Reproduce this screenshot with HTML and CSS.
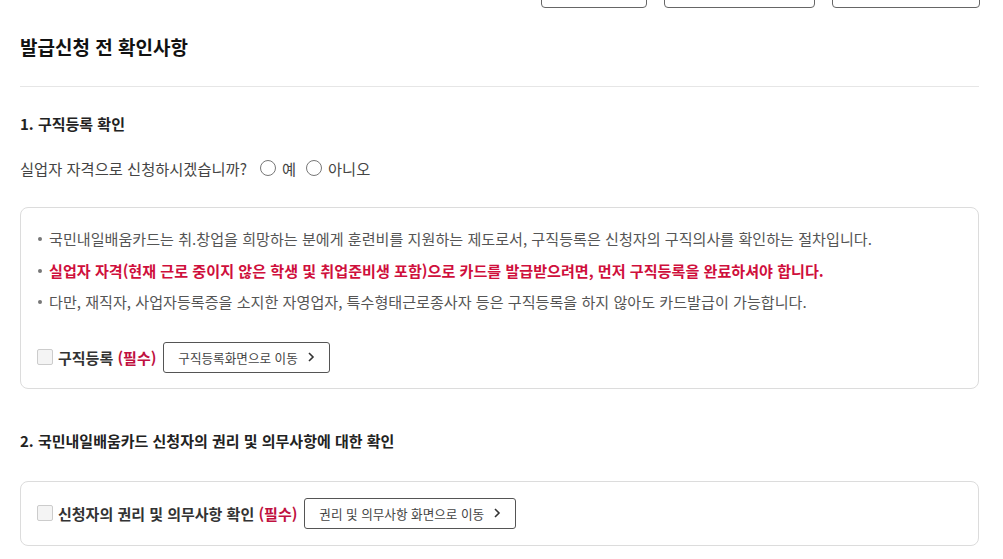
FILE: index.html
```html
<!DOCTYPE html>
<html lang="ko">
<head>
<meta charset="utf-8">
<title>발급신청 전 확인사항</title>
<link rel="stylesheet" href="styles.css">
</head>
<body>
<div class="page">
  <div class="top-actions">
    <button class="top-btn w1" type="button"></button>
    <button class="top-btn w2" type="button"></button>
    <button class="top-btn w3" type="button"></button>
  </div>

  <h2 class="page-title">발급신청 전 확인사항</h2>

  <section class="section">
    <h3 class="section-title">1. 구직등록 확인</h3>
    <div class="question">
      <span class="q-text">실업자 자격으로 신청하시겠습니까?</span>
      <label class="radio"><span class="radio-circle"></span>예</label>
      <label class="radio"><span class="radio-circle"></span>아니오</label>
    </div>
    <div class="box">
      <ul class="bullets">
        <li>국민내일배움카드는 취.창업을 희망하는 분에게 훈련비를 지원하는 제도로서, 구직등록은 신청자의 구직의사를 확인하는 절차입니다.</li>
        <li class="strong">실업자 자격(현재 근로 중이지 않은 학생 및 취업준비생 포함)으로 카드를 발급받으려면, 먼저 구직등록을 완료하셔야 합니다.</li>
        <li>다만, 재직자, 사업자등록증을 소지한 자영업자, 특수형태근로종사자 등은 구직등록을 하지 않아도 카드발급이 가능합니다.</li>
      </ul>
      <div class="check-row spaced">
        <span class="checkbox"></span>
        <span class="check-label">구직등록 <em class="req">(필수)</em></span>
        <button class="link-btn" type="button">구직등록화면으로 이동
          <svg class="chev" width="8" height="12" viewBox="0 0 8 12"><path d="M2 2l4 4-4 4" fill="none" stroke="#333" stroke-width="1.6"/></svg>
        </button>
      </div>
    </div>
  </section>

  <section class="section second">
    <h3 class="section-title">2. 국민내일배움카드 신청자의 권리 및 의무사항에 대한 확인</h3>
    <div class="box">
      <div class="check-row">
        <span class="checkbox"></span>
        <span class="check-label">신청자의 권리 및 의무사항 확인 <em class="req">(필수)</em></span>
        <button class="link-btn" type="button">권리 및 의무사항 화면으로 이동
          <svg class="chev" width="8" height="12" viewBox="0 0 8 12"><path d="M2 2l4 4-4 4" fill="none" stroke="#333" stroke-width="1.6"/></svg>
        </button>
      </div>
    </div>
  </section>
</div>
</body>
</html>
```

FILE: styles.css
```css
* { box-sizing: border-box; }
html, body { margin: 0; padding: 0; background: #fff; }
body {
  font-family: "Noto Sans CJK KR", "Noto Sans", sans-serif;
  color: #333;
  overflow: hidden;
}
.page { padding: 0 24px 0 20px; }

.top-actions {
  display: flex;
  justify-content: flex-end;
  gap: 17px;
  margin-top: -32px;
  margin-right: -1px;
  height: 40px;
}
.top-btn {
  height: 40px;
  background: #fff;
  border: 1px solid #666;
  border-radius: 4px;
  padding: 0;
}
.w1 { width: 106px; }
.w2 { width: 151px; }
.w3 { width: 148px; }

.page-title {
  margin: 0;
  padding-top: 24px;
  font-size: 19px;
  line-height: 30px;
  font-weight: 700;
  color: #111;
  padding-bottom: 24px;
  border-bottom: 1px solid #e6e6e6;
}

.section-title {
  margin: 0;
  font-size: 15px;
  line-height: 20px;
  font-weight: 700;
  color: #222;
}
.section { padding-top: 27px; }
.section.second { padding-top: 42px; }

.question {
  display: flex;
  align-items: center;
  margin-top: 23px;
  font-size: 15.3px;
  line-height: 22px;
  color: #444;
}
.q-text { margin-right: 13px; }
.radio {
  display: inline-flex;
  align-items: center;
  margin-right: 10px;
}
.radio-circle {
  width: 16px;
  height: 16px;
  border: 1px solid #777;
  border-radius: 50%;
  margin-right: 6px;
  background: #fff;
}

.box {
  margin-top: 28px;
  border: 1px solid #dcdcdc;
  border-radius: 8px;
  padding: 15px 16px 15px 16px;
}
.second .box { margin-top: 30px; padding: 16px; }

.bullets {
  list-style: none;
  margin: 0;
  padding: 0;
  font-size: 15.1px;
  line-height: 31.5px;
  color: #555;
}
.bullets li {
  position: relative;
  padding-left: 12px;
  white-space: nowrap;
}
.bullets li::before {
  content: "";
  position: absolute;
  left: 1px;
  top: 14px;
  width: 4px;
  height: 4px;
  border-radius: 50%;
  background: #777;
}
.bullets li.strong {
  color: #cf0f3c;
  font-weight: 700;
}

.check-row {
  display: flex;
  align-items: center;
  height: 31px;
}
.check-row.spaced { margin-top: 24px; }
.checkbox {
  width: 16px;
  height: 16px;
  border: 1px solid #ccc;
  background: #f4f4f4;
  border-radius: 2px;
  margin-right: 5px;
  margin-left: 0;
}
.check-label {
  font-size: 15px;
  font-weight: 700;
  color: #333;
  margin-right: 7px;
}
.req {
  font-style: normal;
  color: #c01040;
}
.link-btn {
  display: inline-flex;
  align-items: center;
  height: 31px;
  padding: 0 14px 0 14px;
  background: #fff;
  border: 1px solid #555;
  border-radius: 3px;
  font-family: inherit;
  font-size: 12.6px;
  color: #444;
}
.chev { margin-left: 9px; }
```
